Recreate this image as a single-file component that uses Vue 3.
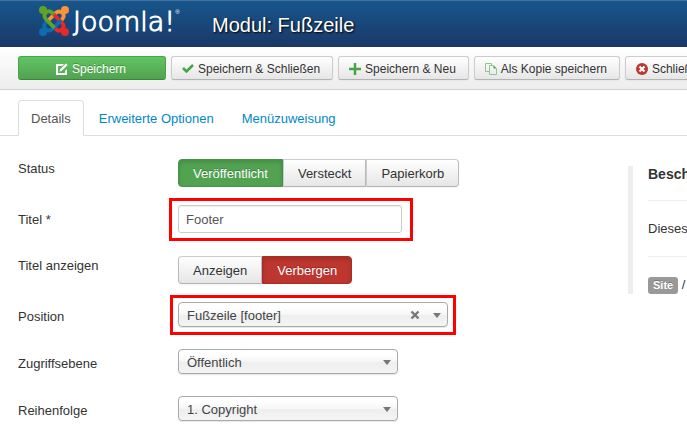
<script setup>
import { ref } from 'vue'

const tabs = ['Details', 'Erweiterte Optionen', 'Menüzuweisung']
const activeTab = ref('Details')

const states = ['Veröffentlicht', 'Versteckt', 'Papierkorb']
const status = ref('Veröffentlicht')
const title = ref('Footer')
const showTitle = ref('Verbergen')
const position = ref('Fußzeile [footer]')
const access = ref('Öffentlich')
const ordering = ref('1. Copyright')

const arms = [
  { color: '#f9943b', angle: 90 },
  { color: '#e52a29', angle: 180 },
  { color: '#0f6cb0', angle: 270 },
  { color: '#5fa424', angle: 0 },
]
</script>

<template>
  <div class="page">
    <header class="header">
      <a class="logo" href="#" aria-label="Joomla!">
        <svg width="30" height="30" viewBox="0 0 30 30" aria-hidden="true">
          <g v-for="arm in arms" :key="arm.angle" :transform="`rotate(${arm.angle} 15 15)`">
            <circle cx="4" cy="4" r="4" :fill="arm.color" />
            <path d="M15 8.5 L13.5 7 C11 4.8 8.6 5 7 6.600 C5 8.6 5 11.2 7.200 13.500 L15.500 21.800"
                  fill="none" :stroke="arm.color" stroke-width="3.8" />
          </g>
        </svg>
        <span class="wordmark">Joomla!</span><span class="reg">®</span>
      </a>
      <h1>Modul: Fußzeile</h1>
    </header>

    <div class="toolbar">
      <button type="button" class="btn save">
        <svg width="12" height="12" viewBox="0 0 12 12">
          <path d="M8 1H0v11h11V6L9 8v2H2V3h4z" fill="#fff" />
          <path d="M3 9L4 6L10 0L12 2L6 8z" fill="#fff" stroke="#5ab65a" stroke-width="0.6" />
        </svg>
        Speichern
      </button>
      <button type="button" class="btn">
        <svg width="12" height="12" viewBox="0 0 12 12">
          <path d="M1 5l3.500 3.500L11 2" fill="none" stroke="#46a546" stroke-width="2.5" />
        </svg>
        Speichern &amp; Schließen
      </button>
      <button type="button" class="btn">
        <svg width="12" height="12" viewBox="0 0 12 12">
          <path d="M6 0v12M0 6h12" stroke="#46a546" stroke-width="2.5" />
        </svg>
        Speichern &amp; Neu
      </button>
      <button type="button" class="btn">
        <svg width="12" height="12" viewBox="0 0 12 12">
          <path d="M4.5 8.5h-4v-8h6v2M4.5 2.5h4l3 3v6h-7z" fill="none" stroke="#8cc98c" />
          <path d="M8.5 2.5v3h3z" fill="#46a546" />
        </svg>
        Als Kopie speichern
      </button>
      <button type="button" class="btn">
        <svg width="12" height="12" viewBox="0 0 12 12">
          <circle cx="6" cy="6" r="6" fill="#bd362f" />
          <path d="M3.5 3.5l5 5M8.5 3.5l-5 5" stroke="#fff" stroke-width="2.2" />
        </svg>
        Schließen
      </button>
    </div>

    <nav class="tabs">
      <a v-for="tab in tabs" :key="tab" href="#" :class="{ active: tab === activeTab }"
         @click.prevent="activeTab = tab">{{ tab }}</a>
    </nav>

    <main class="content">
      <form class="form" @submit.prevent>
        <div class="row" role="radiogroup" aria-labelledby="status-label">
          <span id="status-label" class="name">Status</span>
          <div class="group">
            <label v-for="s in states" :key="s" :class="{ green: s === status }">
              <input v-model="status" type="radio" name="status" :value="s">{{ s }}
            </label>
          </div>
        </div>
        <div class="row tall">
          <label class="name" for="title">Titel *</label>
          <div class="field marked marked-title">
            <input id="title" v-model="title" type="text">
          </div>
        </div>
        <div class="row" role="radiogroup" aria-labelledby="show-label">
          <span id="show-label" class="name">Titel anzeigen</span>
          <div class="group">
            <label v-for="s in ['Anzeigen', 'Verbergen']" :key="s"
                   :class="{ red: s === showTitle && s === 'Verbergen', green: s === showTitle && s === 'Anzeigen' }">
              <input v-model="showTitle" type="radio" name="show-title" :value="s">{{ s }}
            </label>
          </div>
        </div>
        <div class="row chosen">
          <label class="name" for="position">Position</label>
          <div class="field wide marked">
            <select id="position" v-model="position">
              <option value=""></option>
              <option>Fußzeile [footer]</option>
            </select>
            <button type="button" class="clear" aria-label="Auswahl löschen" @click="position = ''">
              <svg width="10" height="10" viewBox="0 0 10 10">
                <path d="M1.5 1.5l7 7M8.5 1.5l-7 7" stroke="#777" stroke-width="2.4" />
              </svg>
            </button>
            <svg class="caret" width="8" height="5" viewBox="0 0 8 5"><path d="M0 0h8L4 5z" /></svg>
          </div>
        </div>
        <div class="row chosen">
          <label class="name" for="access">Zugriffsebene</label>
          <div class="field">
            <select id="access" v-model="access">
              <option>Öffentlich</option>
            </select>
            <svg class="caret" width="8" height="5" viewBox="0 0 8 5"><path d="M0 0h8L4 5z" /></svg>
          </div>
        </div>
        <div class="row chosen">
          <label class="name" for="ordering">Reihenfolge</label>
          <div class="field">
            <select id="ordering" v-model="ordering">
              <option>1. Copyright</option>
            </select>
            <svg class="caret" width="8" height="5" viewBox="0 0 8 5"><path d="M0 0h8L4 5z" /></svg>
          </div>
        </div>
      </form>

      <aside class="description">
        <h2>Beschreibung</h2>
        <hr>
        <p>Dieses Modul</p>
        <hr>
        <p><span class="badge">Site</span> /</p>
      </aside>
    </main>
  </div>
</template>

<style>
body { margin: 0; background: #fff; }
</style>

<style scoped>
.page { overflow: hidden; color: #333; font: 13px/18px "Liberation Sans", Arial, sans-serif; }
.page * { box-sizing: border-box; }
button, input, select { margin: 0; font: inherit; color: inherit; }

.header {
  display: flex;
  align-items: center;
  height: 47px;
  padding-left: 39px;
  border-top: 1px solid #45709a;
  background: linear-gradient(#17568c, #1a3867);
}
.logo { display: flex; align-items: center; align-self: flex-start; width: 173px; height: 40px; color: #fff; text-decoration: none; }
.wordmark { margin: 2px 0 0 4px; font: 27px/30px "DejaVu Sans Light", "DejaVu Sans", sans-serif; font-weight: 200; -webkit-text-stroke: 1px #fff; }
.reg { align-self: flex-start; margin-top: 5px; font-size: 6px; line-height: 12px; }
h1 { margin: 2px 0 0; color: #fff; font-size: 20px; font-weight: normal; line-height: 30px; text-shadow: 1px 1px 2px #000; white-space: nowrap; }

.toolbar {
  display: flex;
  gap: 5px;
  padding: 9px 0 9px 18px;
  border-bottom: 1px solid #d0d0d0;
  background: linear-gradient(#fff, #ededed);
}
.btn {
  display: flex;
  flex: none;
  align-items: center;
  justify-content: center;
  gap: 4px;
  height: 24px;
  padding: 1px 12px 0 10px;
  border: 1px solid #ccc;
  border-bottom-color: #b3b3b3;
  border-radius: 3px;
  background: linear-gradient(#fff, #e6e6e6);
  box-shadow: inset 0 1px 0 #fff, 0 1px 2px rgba(0, 0, 0, 0.05);
  font-size: 12px;
  white-space: nowrap;
}
.btn.save {
  width: 148px;
  border-color: #46a546 #46a546 #3a873a;
  background: linear-gradient(#62c462, #51a351);
  box-shadow: none;
  color: #fff;
  text-shadow: 0 -1px 0 rgba(0, 0, 0, 0.25);
}

.tabs { display: flex; margin-top: 10px; padding-left: 18px; border-bottom: 1px solid #ddd; }
.tabs a {
  margin: 0 2px -1px 0;
  padding: 9px 12px 7px;
  border: 1px solid transparent;
  border-radius: 4px 4px 0 0;
  color: #08c;
  line-height: 18px;
  text-decoration: none;
}
.tabs .active { border-color: #ddd #ddd #fff; background: #fff; color: #555; }

.content { display: flex; align-items: flex-start; padding: 23px 0 10px 18px; }
.form { display: grid; flex: 1; gap: 18px; }
.row { display: flex; height: 28px; }
.row.tall { height: 33px; }
.row.chosen { height: 29px; }
.name { flex: none; width: 160px; padding-top: 1px; }
.tall .name, .chosen .name { padding-top: 6px; }

.group { display: flex; }
.group label {
  position: relative;
  height: 28px;
  padding: 5px 14px 3px;
  border: 1px solid #bbb;
  border-color: #ccc #bbb #b3b3b3;
  background: linear-gradient(#fff, #e6e6e6);
  box-shadow: 0 1px 2px rgba(0, 0, 0, 0.05);
}
.group label + label { border-left-color: #ccc; }
.group label:first-child { border-radius: 4px 0 0 4px; }
.group label:last-child { border-radius: 0 4px 4px 0; }
.group input { position: absolute; opacity: 0; pointer-events: none; }
.group .green, .group .red { box-shadow: inset 0 2px 4px rgba(0, 0, 0, 0.15); color: #fff; text-shadow: 0 -1px 0 rgba(0, 0, 0, 0.25); }
.group .green { border-color: #46924a; background: #51a351; }
.group label.red { border-color: #a52f29; background: #bd362f; }

.field { position: relative; align-self: flex-start; width: 220px; }
.field.wide { width: 270px; }
.field.marked-title { width: 224px; }
.field input {
  display: block;
  width: 100%;
  height: 28px;
  padding: 4px 7px;
  border: 1px solid #ccc;
  border-radius: 3px;
  background: #fff;
  box-shadow: inset 0 1px 1px rgba(0, 0, 0, 0.075);
  color: #555;
}
.field select {
  display: block;
  width: 100%;
  height: 25px;
  padding: 2px 24px 0 8px;
  appearance: none;
  border: 1px solid #aaa;
  border-radius: 4px;
  background: linear-gradient(#fff 20%, #f6f6f6 50%, #eee 52%, #f4f4f4 100%);
  box-shadow: 0 1px 1px rgba(0, 0, 0, 0.1);
  color: #444;
}
.caret { position: absolute; top: 11px; right: 7px; fill: #777; pointer-events: none; }
.clear { position: absolute; top: 5px; right: 25px; display: flex; align-items: center; justify-content: center; width: 16px; height: 16px; padding: 0; border: 0; background: none; }
.marked::after {
  content: "";
  position: absolute;
  inset: -7px -8px -8px;
  border: 3px solid #f00;
  pointer-events: none;
}
.marked-title::after { inset: -7px -11px -8px -9px; }

.description { width: 59px; margin-top: 7px; padding-left: 15px; border-left: 5px solid #eee; overflow: hidden; white-space: nowrap; }
.description h2 { margin: 0; font-size: 14px; line-height: 16px; }
.description hr { margin: 18px 0; border: 0; border-top: 1px solid #eee; }
.description p { margin: 0; line-height: 19px; }
.badge { display: inline-block; padding: 0 5px; border-radius: 3px; background: #999; color: #fff; font-size: 11px; font-weight: bold; line-height: 17px; text-shadow: 0 -1px 0 rgba(0, 0, 0, 0.25); }
</style>
